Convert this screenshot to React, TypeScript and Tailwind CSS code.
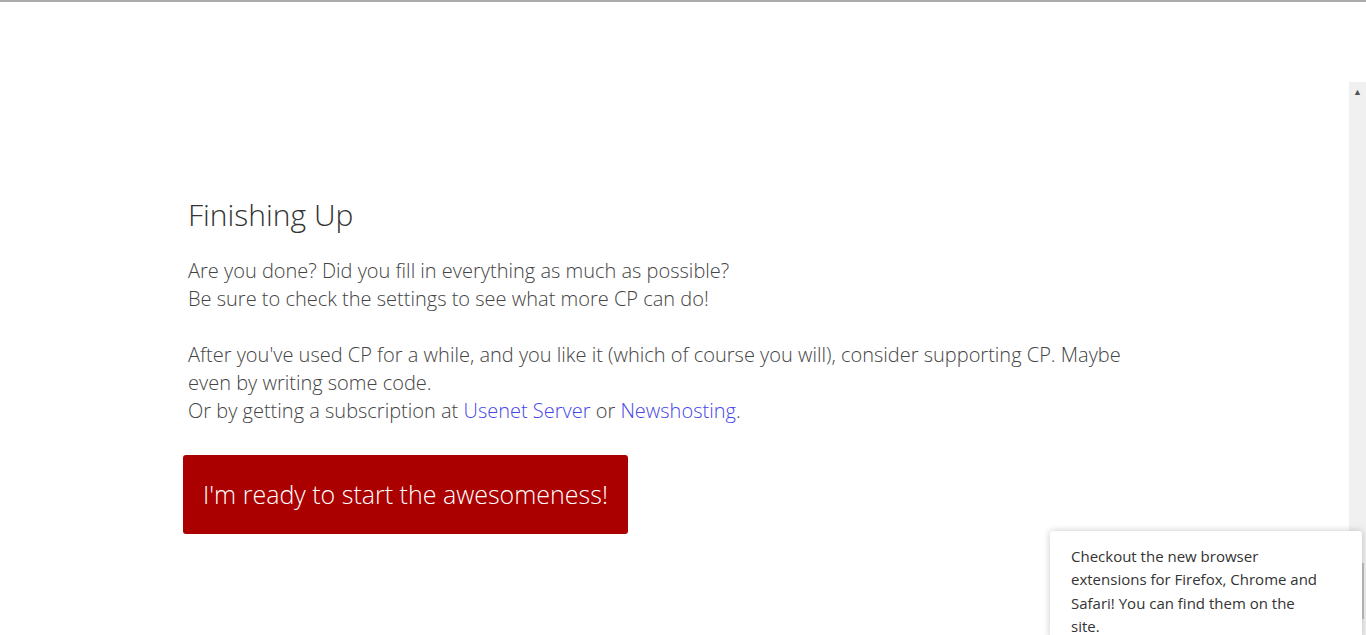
export default function App() {
  return (
    <main className="relative flex h-[635px] w-full overflow-hidden border-t-2 border-[#ababab] bg-white font-['Open_Sans',sans-serif] text-[#444]">
      <div className="flex-1">
        <div className="ml-[183px] w-[1000px] pl-[5px] pt-[195px]">
          <h2 className="text-[30px] font-light leading-[36px] text-[#333]">
            Finishing Up
          </h2>
          <div className="mt-[24px] text-[20px] font-light leading-[28px]">
            <p>
              Are you done? Did you fill in everything as much as possible?
              <br />
              Be sure to check the settings to see what more CP can do!
            </p>
            <p className="mt-[28px]">
              After you've used CP for a while, and you like it (which of course
              you will), consider supporting CP. Maybe
              <br />
              even by writing some code.
              <br />
              Or by getting a subscription at{" "}
              <a href="#" className="text-[#4646e8]">
                Usenet Server
              </a>{" "}
              or{" "}
              <a href="#" className="text-[#4646e8]">
                Newshosting
              </a>
              .
            </p>
          </div>
          <button className="-ml-[5px] mt-[30px] h-[79px] rounded-[3px] bg-[#ab0000] px-[20px] text-[25px] font-light text-white">
            I'm ready to start the awesomeness!
          </button>
        </div>
      </div>

      {/* scrollbar */}
      <div className="mt-[80px] flex w-[17px] flex-col items-center bg-[#f0f0f0]">
        <span className="mt-[5px] text-[9px] leading-none text-[#505050]">▲</span>
        <div className="mt-auto h-[56px] w-[13px] bg-[#c1c1c1]" />
        <span className="mt-[6px] mb-[2px] text-[8px] leading-none text-[#a0a0a0]">▼</span>
      </div>

      {/* notification */}
      <div className="absolute top-[529px] left-[1050px] w-[312px] rounded-[3px] bg-white pt-[14px] pr-[30px] pl-[21px] text-[15px] leading-[23.4px] text-[#333] shadow-[0_0_7px_rgba(0,0,0,0.22)]">
        Checkout the new browser
        <br />
        extensions for Firefox, Chrome and
        <br />
        Safari! You can find them on the
        <br />
        site.
      </div>
    </main>
  );
}
